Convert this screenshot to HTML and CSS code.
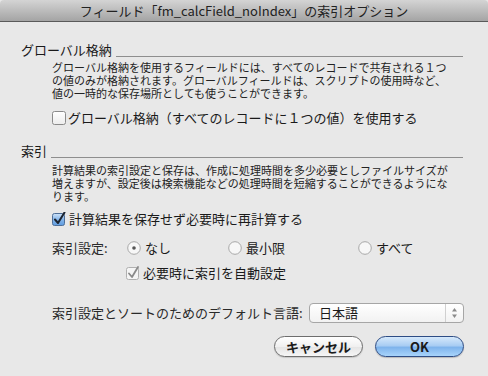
FILE: index.html
```html
<!DOCTYPE html>
<html lang="ja">
<head>
<meta charset="utf-8">
<link rel="stylesheet" href="styles.css">
</head>
<body>
<div class="window">
  <div class="titlebar">フィールド「fm_calcField_noIndex」の索引オプション</div>
  <div class="content">
    <div class="group-head"><span>グローバル格納</span><span class="rule"></span></div>
    <div class="desc">
      <span class="line">グローバル格納を使用するフィールドには、すべてのレコードで共有される１つ</span>
      <span class="line">の値のみが格納されます。グローバルフィールドは、スクリプトの使用時など、</span>
      <span class="line">値の一時的な保存場所としても使うことができます。</span>
    </div>
    <div class="check global-check">
      <svg class="box" width="14" height="14" viewBox="0 0 14 14">
        <defs><linearGradient id="gw" x1="0" y1="0" x2="0" y2="1"><stop offset="0" stop-color="#ffffff"/><stop offset="1" stop-color="#ececec"/></linearGradient></defs>
        <rect x="0.5" y="0.5" width="13" height="13" rx="2" fill="url(#gw)" stroke="#8a8a8a"/>
      </svg>
      <span>グローバル格納（すべてのレコードに１つの値）を使用する</span>
    </div>

    <div class="group-head index-head"><span>索引</span><span class="rule"></span></div>
    <div class="desc desc2">
      <span class="line">計算結果の索引設定と保存は、作成に処理時間を多少必要としファイルサイズが</span>
      <span class="line">増えますが、設定後は検索機能などの処理時間を短縮することができるようにな</span>
      <span class="line">ります。</span>
    </div>
    <div class="check calc-check">
      <svg class="box" width="15" height="14" viewBox="0 0 15 14">
        <defs><linearGradient id="gb" x1="0" y1="0" x2="0" y2="1"><stop offset="0" stop-color="#cfe3f8"/><stop offset="0.5" stop-color="#86b6ea"/><stop offset="1" stop-color="#5e9be0"/></linearGradient></defs>
        <rect x="0.5" y="1.5" width="12" height="12" rx="2" fill="url(#gb)" stroke="#4f6f98"/>
        <path d="M3 7.5 L6 11 L12.5 0.5" fill="none" stroke="#1c2430" stroke-width="2" stroke-linecap="round" stroke-linejoin="round"/>
      </svg>
      <span>計算結果を保存せず必要時に再計算する</span>
    </div>

    <div class="index-row">
      <span class="index-label">索引設定:</span>
      <span class="radio-opt">
        <svg class="radio" width="14" height="14" viewBox="0 0 14 14">
          <circle cx="7" cy="7" r="6.3" fill="#f7f7f7" stroke="#a8a8a8"/>
          <circle cx="7" cy="7" r="1.8" fill="#555"/>
        </svg>なし</span>
      <span class="radio-opt">
        <svg class="radio" width="14" height="14" viewBox="0 0 14 14">
          <circle cx="7" cy="7" r="6.3" fill="#f7f7f7" stroke="#a8a8a8"/>
        </svg>最小限</span>
      <span class="radio-opt">
        <svg class="radio" width="14" height="14" viewBox="0 0 14 14">
          <circle cx="7" cy="7" r="6.3" fill="#f7f7f7" stroke="#a8a8a8"/>
        </svg>すべて</span>
    </div>
    <div class="check auto-check">
      <svg class="box" width="14" height="14" viewBox="0 0 14 14">
        <rect x="0.5" y="1.5" width="12" height="12" rx="2" fill="#f5f5f5" stroke="#b0b0b0"/>
        <path d="M3 7.5 L6 11 L12 1" fill="none" stroke="#8a8a8a" stroke-width="1.8" stroke-linecap="round" stroke-linejoin="round"/>
      </svg>
      <span>必要時に索引を自動設定</span>
    </div>

    <div class="lang-row">
      <span class="lang-label">索引設定とソートのためのデフォルト言語:</span>
      <div class="popup">
        <span class="popup-text">日本語</span>
        <span class="popup-arrows">
          <svg width="7" height="12" viewBox="0 0 7 12">
            <path d="M3.5 1 L6 4.5 L1 4.5 Z" fill="#8a8a8a"/>
            <path d="M3.5 11 L6 7.5 L1 7.5 Z" fill="#8a8a8a"/>
          </svg>
        </span>
      </div>
    </div>

    <div class="buttons">
      <button class="btn cancel" type="button">キャンセル</button>
      <button class="btn ok" type="button">OK</button>
    </div>
  </div>
</div>
</body>
</html>
```

FILE: styles.css
```css
* { box-sizing: border-box; margin: 0; padding: 0; }
html, body { width: 488px; height: 376px; overflow: hidden; }
body {
  background: #e8e8e8;
  font-family: "Noto Sans CJK JP", "Noto Sans", sans-serif;
  color: #1a1a1a;
}
.window { width: 488px; height: 376px; background: #e8e8e8; }
.titlebar {
  height: 22px;
  background: linear-gradient(#d4d4d4, #a4a4a4);
  border-bottom: 1px solid #5a5a5a;
  border-radius: 4px 4px 0 0;
  text-align: center;
  font-size: 13px;
  line-height: 21px;
  color: #222;
}
.content { padding: 20px 24px 0 21px; }
.group-head {
  display: flex;
  align-items: flex-end;
  font-size: 13px;
  line-height: 16px;
  height: 16px;
}
.rule {
  flex: 1;
  border-top: 1px solid #8e8e8e;
  margin: 0 1px 1px 4px;
}
.desc {
  display: flex;
  flex-direction: column;
  margin: 3px 0 0 31px;
  font-size: 11px;
  color: #222;
  white-space: nowrap;
}
.line {
  display: block;
  height: 13px;
  line-height: 13px;
}
.check {
  display: flex;
  align-items: center;
  gap: 2px;
  font-size: 13px;
  line-height: 16px;
  height: 16px;
}
.box { flex: none; }
.global-check { margin: 10px 0 0 31px; }
.index-head { margin-top: 17px; }
.desc2 { margin-top: 5px; }
.calc-check { margin: 8px 0 0 31px; }
.index-row {
  display: grid;
  grid-template-columns: 75px 101px 130px auto;
  align-items: center;
  margin: 13px 0 0 31px;
  font-size: 13px;
  line-height: 16px;
  height: 16px;
}
.index-label { color: #2a2a2a; }
.radio-opt { display: flex; align-items: center; gap: 4px; }
.radio { flex: none; }
.auto-check { margin: 9px 0 0 105px; gap: 3px; }
.lang-row {
  display: flex;
  align-items: center;
  margin: 22px 0 0 31px;
  font-size: 13px;
  height: 20px;
}
.lang-label { color: #2a2a2a; line-height: 16px; }
.popup {
  margin-left: auto;
  width: 155px;
  height: 20px;
  display: flex;
  align-items: center;
  background: linear-gradient(#ffffff, #f2f2f2);
  border: 1px solid #a6a6a6;
  border-radius: 4px;
}
.popup-text { flex: 1; padding-left: 9px; font-size: 13px; line-height: 16px; }
.popup-arrows {
  width: 18px;
  height: 18px;
  border-left: 1px solid #d0d0d0;
  display: flex;
  align-items: center;
  justify-content: center;
}
.popup-arrows svg { display: block; }
.buttons {
  display: flex;
  justify-content: flex-end;
  gap: 12px;
  margin-top: 13px;
}
.btn {
  height: 21px;
  border-radius: 11px;
  font-family: "Noto Sans CJK JP", "Noto Sans", sans-serif;
  font-size: 13px;
  line-height: 17px;
  font-weight: bold;
  color: #1a1a1a;
}
.cancel {
  width: 89px;
  background: linear-gradient(#ffffff, #f0f0f0 50%, #e4e4e4 51%, #f6f6f6);
  border: 1px solid #6e6e6e;
  box-shadow: 0 1px 1px rgba(0,0,0,0.15);
}
.ok {
  width: 89px;
  background: linear-gradient(#d6e9fb, #a9cdf3 45%, #7fb4ec 55%, #a8d4fb);
  border: 1px solid #2e4d85;
  box-shadow: 0 1px 1px rgba(0,0,0,0.2);
}
```
